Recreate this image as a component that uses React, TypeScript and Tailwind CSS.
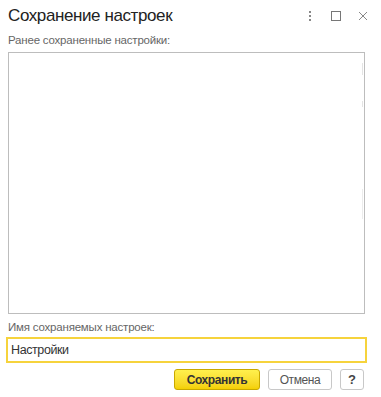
import { useState } from "react";

export default function App() {
  const [name, setName] = useState("Настройки");

  return (
    <div className="w-[381px] h-[397px] bg-white font-[family-name:Liberation_Sans,Arial,sans-serif] text-[#333] relative overflow-hidden">
      {/* header */}
      <div className="flex items-center h-[29px] pl-2 pr-[12px] pt-[2px]">
        <div className="flex-1 text-[17px] leading-none tracking-[-0.4px] text-[#222]">Сохранение настроек</div>
        <div className="flex items-center gap-[15px]">
          <svg width="10" height="14" viewBox="0 0 10 14">
            <rect x="4" y="2" width="2" height="2" fill="#888" />
            <rect x="4" y="6" width="2" height="2" fill="#888" />
            <rect x="4" y="10" width="2" height="2" fill="#888" />
          </svg>
          <svg width="12" height="12" viewBox="0 0 12 12">
            <rect x="1.5" y="1.5" width="9" height="9" fill="none" stroke="#777" strokeWidth="1" />
          </svg>
          <svg width="12" height="12" viewBox="0 0 12 12">
            <path d="M2 2 L10 10 M10 2 L2 10" stroke="#888" strokeWidth="1" />
          </svg>
        </div>
      </div>

      <div className="px-2 pt-[4px]">
        <div className="text-[11.5px] leading-[14px] tracking-[-0.2px] text-[#666] mb-[5px]">Ранее сохраненные настройки:</div>
        <div className="w-[357px] h-[262px] border border-[#bdbdbd] bg-white relative">
          <div className="absolute right-[1px] top-[10px] w-[1px] h-[12px] bg-[#e4e4e4]" />
          <div className="absolute right-[1px] top-[48px] w-[1px] h-[6px] bg-[#e4e4e4]" />
          <div className="absolute right-[1px] top-[136px] w-[1px] h-[30px] bg-[#ececec]" />
        </div>

        <div className="text-[11.5px] leading-[14px] tracking-[-0.2px] text-[#666] mt-[6px]">Имя сохраняемых настроек:</div>
      </div>

      <div className="pl-[6px] pt-[3px]">
        <div className="w-[361px] h-[26px] border-2 border-[#f6d33c] flex items-center pl-[3px]">
          <input
            value={name}
            onChange={(e) => setName(e.target.value)}
            className="w-full outline-none bg-transparent text-[12.5px] tracking-[-0.4px] text-[#333] caret-[#333]"
          />
        </div>
      </div>

      <div className="flex justify-end pr-[17px] pt-[6px] gap-[8px]">
        <button className="w-[86px] h-[21px] rounded-[3px] border border-[#c9a800] bg-gradient-to-b from-[#fff04d] to-[#f4d000] text-[12px] tracking-[-0.4px] font-bold text-[#333] leading-none">
          Сохранить
        </button>
        <button className="w-[64px] h-[21px] rounded-[3px] border border-[#c8c8c8] bg-white text-[12px] tracking-[-0.4px] text-[#555] leading-none">
          Отмена
        </button>
        <button className="w-[24px] h-[21px] rounded-[3px] border border-[#c8c8c8] bg-white text-[13px] font-bold text-[#444] leading-none">
          ?
        </button>
      </div>
    </div>
  );
}
